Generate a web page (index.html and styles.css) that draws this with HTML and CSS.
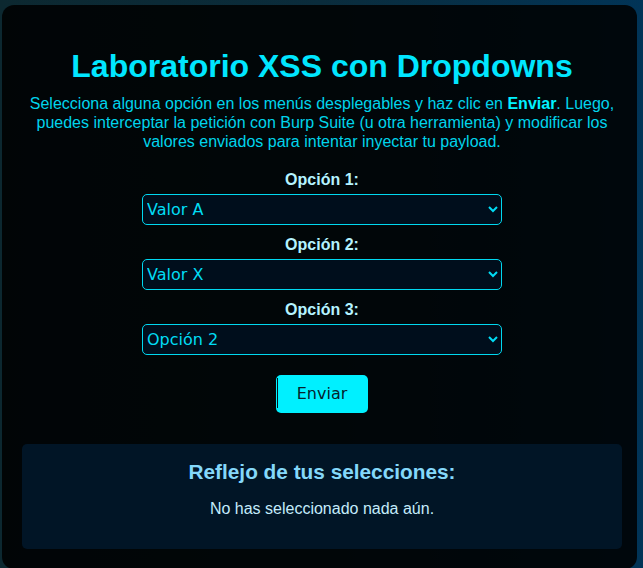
FILE: index.html
```html
<!DOCTYPE html>
<html lang="es">
<head>
<meta charset="utf-8">
<title>Laboratorio XSS con Dropdowns</title>
<link rel="stylesheet" href="styles.css">
</head>
<body>
<div class="container">
  <h1 class="title">Laboratorio XSS con Dropdowns</h1>
  <p class="intro">Selecciona alguna opción en los menús desplegables y haz clic en <strong>Enviar</strong>. Luego, puedes interceptar la petición con Burp Suite (u otra herramienta) y modificar los valores enviados para intentar inyectar tu payload.</p>
  <form class="form">
    <label class="label" for="op1">Opción 1:</label>
    <select class="select" id="op1"><option>Valor A</option><option>Valor B</option></select>
    <label class="label" for="op2">Opción 2:</label>
    <select class="select" id="op2"><option>Valor X</option><option>Valor Y</option></select>
    <label class="label" for="op3">Opción 3:</label>
    <select class="select" id="op3"><option>Opción 2</option><option>Opción 1</option></select>
    <button class="button" type="button">Enviar</button>
  </form>
  <div class="result">
    <h3 class="result-title">Reflejo de tus selecciones:</h3>
    <p class="result-text">No has seleccionado nada aún.</p>
  </div>
</div>
</body>
</html>
```
FILE: styles.css
```css
html, body {
  margin: 0;
  height: 100%;
}
body {
  background: linear-gradient(to right, #0c2830, #0a2c3c 50%, #013457);
  font-family: "Liberation Sans", Arial, sans-serif;
  overflow: hidden;
}
.container {
  margin: 5px 6px 0 2px;
  min-height: 561px;
  box-sizing: border-box;
  background: rgba(0, 0, 0, 0.86);
  border-radius: 12px;
  padding: 20px 15px 20px 20px;
  text-align: center;
}
.title {
  margin: 23px 0 0;
  font-size: 32px;
  font-weight: bold;
  color: #00e6ff;
  line-height: 37px;
}
.intro {
  margin: 9px 0 0;
  font-size: 16px;
  line-height: 19px;
  color: #00d4ec;
}
.intro strong {
  color: #00f2ff;
}
.form {
  display: flex;
  flex-direction: column;
  align-items: center;
  margin-top: 20px;
}
.label {
  font-weight: bold;
  font-size: 16px;
  line-height: 18px;
  color: #b4f2ff;
  margin-top: 11px;
}
.label:first-child {
  margin-top: 0;
}
.select {
  margin-top: 5px;
  width: 360px;
  height: 31px;
  box-sizing: border-box;
  background: #000e1c;
  color: #00dcf4;
  border: 1px solid #00d8f0;
  border-radius: 5px;
  font-family: "DejaVu Sans", sans-serif;
  font-size: 16px;
  padding: 0;
}
.button {
  position: relative;
  margin-top: 20px;
  background: #00f0ff;
  color: #06222c;
  border: none;
  border-radius: 5px;
  padding: 9px 21px 10px 21px;
  font-family: "DejaVu Sans", sans-serif;
  font-size: 16px;
  line-height: 19px;
}
.button::before {
  content: "";
  position: absolute;
  left: 1px;
  top: 3px;
  bottom: 5px;
  width: 1px;
  background: #04161c;
}
.result {
  margin-top: 31px;
  background: #011526;
  border-radius: 5px;
  padding: 16px 15px 15px;
}
.result-title {
  margin: 0;
  font-size: 20.8px;
  line-height: 24px;
  color: #84d8fa;
}
.result-text {
  margin: 16px 0 16px;
  font-size: 16px;
  line-height: 18px;
  color: #c4ecfc;
}
```
